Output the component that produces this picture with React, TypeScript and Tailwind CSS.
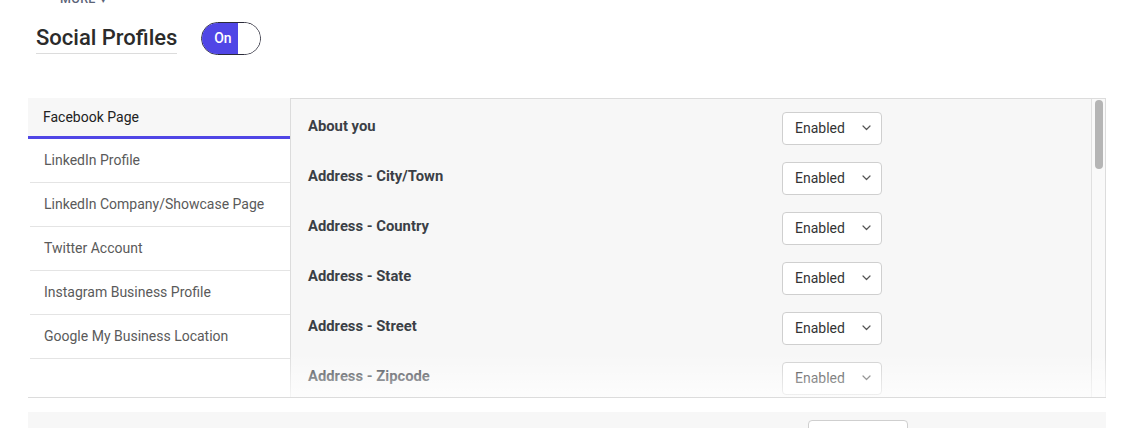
const tabs = [
  "LinkedIn Profile",
  "LinkedIn Company/Showcase Page",
  "Twitter Account",
  "Instagram Business Profile",
  "Google My Business Location",
];

const fields = [
  "About you",
  "Address - City/Town",
  "Address - Country",
  "Address - State",
  "Address - Street",
  "Address - Zipcode",
];

function Chevron() {
  return (
    <svg width="9" height="6" viewBox="0 0 9 6" fill="none" className="shrink-0">
      <path d="M1 1l3.5 3.5L8 1" stroke="#555" strokeWidth="1.2" strokeLinecap="round" strokeLinejoin="round" />
    </svg>
  );
}

function StatusSelect({ value = "Enabled" }: { value?: string }) {
  return (
    <div className="flex h-[33px] w-[100px] items-center justify-between rounded-[4px] border border-[#cfcfcf] bg-white pl-[12px] pr-[10px] text-[14px] text-[#333]">
      <span>{value}</span>
      <Chevron />
    </div>
  );
}

export default function App() {
  return (
    <div className="h-[428px] w-full overflow-hidden bg-white font-['Roboto',sans-serif]">
      <div className="-mt-[9px] pl-[60px] text-[12.5px] font-medium uppercase leading-[16px] tracking-wide text-[#5b6478]">
        More <span className="text-[8px]">▼</span>
      </div>

      <div className="mt-[13px] flex items-center gap-[24px] pl-[36px]">
        <h2 className="border-b border-[#dcdcdc] pb-[1px] text-[22px] font-medium leading-[28px] text-[#2b2b2b]">
          Social Profiles
        </h2>
        <div className="flex h-[33px] w-[60px] overflow-hidden rounded-full border-[1.5px] border-[#2b2b3a]">
          <div className="flex w-[36px] items-center justify-center bg-[#5046e6] pl-[5px] text-[14px] font-medium text-white">
            On
          </div>
          <div className="flex-1 bg-white" />
        </div>
      </div>

      <div className="relative ml-[28px] mr-[38px] mt-[43px] flex h-[300px] border-b border-[#dcdcdc]">
        <div className="w-[262px] shrink-0">
          <div className="flex h-[41px] items-center border-b-[3px] border-[#5046e6] bg-[#f7f7f7] pl-[15px] text-[14px] text-[#222]">
            Facebook Page
          </div>
          {tabs.map((t) => (
            <div
              key={t}
              className="ml-[2px] flex h-[44px] items-center border-b border-[#e4e4e4] pl-[14px] text-[14px] text-[#5a5a5a]"
            >
              {t}
            </div>
          ))}
        </div>

        <div className="flex flex-1 overflow-hidden border-l border-t border-r border-[#dcdcdc] bg-[#f7f7f7]">
          <div className="flex-1 pt-[4px]">
            {fields.map((f) => (
              <div key={f} className="flex h-[50px] items-center pl-[17px]">
                <div className="w-[474px] pb-[4px] text-[14.8px] font-bold text-[#3b3f46]">{f}</div>
                <StatusSelect />
              </div>
            ))}
          </div>
          <div className="w-[14px] shrink-0 border-l border-[#e0e0e0] bg-[#f9f9f9] pt-[1px]">
            <div className="mx-auto h-[69px] w-[8px] rounded-full bg-[#b5b5b5]" />
          </div>
        </div>

        <div className="pointer-events-none absolute bottom-0 left-[262px] -right-[7px] h-[44px] bg-gradient-to-b from-white/0 to-white/70" />
      </div>

      <div className="relative ml-[28px] mr-[38px] mt-[14px] h-[40px] bg-[#f7f7f7]">
        <div className="absolute left-[780px] top-[8px] h-[33px] w-[100px] rounded-[4px] border border-[#cfcfcf] bg-white" />
      </div>
    </div>
  );
}
